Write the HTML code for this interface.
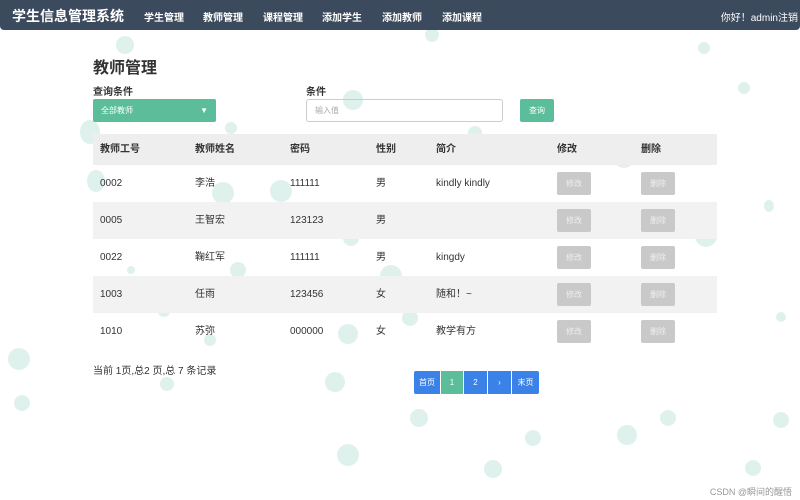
<!DOCTYPE html>
<html><head><meta charset="utf-8"><style>
body{margin:0;width:800px;height:500px;background:#fff;position:relative;overflow:hidden;font-family:"Liberation Sans","Noto Sans CJK SC",sans-serif;color:#333}
.nav{position:absolute;left:0;top:0;width:800px;height:30px;background:#3b4a5c;border-radius:0 0 4px 4px;color:#fff}
.nav .t{position:absolute;left:12px;top:6px;font-size:14px;font-weight:bold}
.nav a{position:absolute;top:9px;font-size:10px;font-weight:bold}
.b{position:absolute;border-radius:50%;background:rgba(140,205,185,.28)}
.a{position:absolute}
table{position:absolute;left:93px;top:134px;width:624px;border-collapse:collapse;font-size:10px}
td{height:37px;padding:0;vertical-align:middle;line-height:14px}
tr.h td{height:31px;background:#eeeeee;font-weight:bold}
tr.s td{background:#f2f2f2}
.btn{display:inline-block;width:34px;height:23px;background:#c9c9c9;color:#eee;font-size:8px;text-align:center;line-height:23px;border-radius:2px;vertical-align:middle}
.p{position:absolute;top:371px;height:23px;color:#fff;font-size:8px;text-align:center;line-height:23px;background:#3a82e8;border-right:1px solid #fff}
</style></head><body>
<div class="b" style="left:116px;top:36px;width:18px;height:18px"></div>
<div class="b" style="left:425px;top:28px;width:14px;height:14px"></div>
<div class="b" style="left:698px;top:42px;width:12px;height:12px"></div>
<div class="b" style="left:738px;top:82px;width:12px;height:12px"></div>
<div class="b" style="left:343px;top:90px;width:20px;height:20px"></div>
<div class="b" style="left:80px;top:120px;width:20px;height:24px"></div>
<div class="b" style="left:225px;top:122px;width:12px;height:12px"></div>
<div class="b" style="left:468px;top:126px;width:14px;height:14px"></div>
<div class="b" style="left:613px;top:146px;width:22px;height:22px"></div>
<div class="b" style="left:87px;top:170px;width:18px;height:22px"></div>
<div class="b" style="left:212px;top:182px;width:22px;height:22px"></div>
<div class="b" style="left:270px;top:180px;width:22px;height:22px"></div>
<div class="b" style="left:318px;top:206px;width:20px;height:20px"></div>
<div class="b" style="left:410px;top:219px;width:18px;height:18px"></div>
<div class="b" style="left:343px;top:230px;width:16px;height:16px"></div>
<div class="b" style="left:695px;top:225px;width:22px;height:22px"></div>
<div class="b" style="left:764px;top:200px;width:10px;height:12px"></div>
<div class="b" style="left:230px;top:262px;width:16px;height:16px"></div>
<div class="b" style="left:380px;top:265px;width:22px;height:22px"></div>
<div class="b" style="left:127px;top:266px;width:8px;height:8px"></div>
<div class="b" style="left:158px;top:305px;width:12px;height:12px"></div>
<div class="b" style="left:402px;top:310px;width:16px;height:16px"></div>
<div class="b" style="left:338px;top:324px;width:20px;height:20px"></div>
<div class="b" style="left:204px;top:334px;width:12px;height:12px"></div>
<div class="b" style="left:8px;top:348px;width:22px;height:22px"></div>
<div class="b" style="left:325px;top:372px;width:20px;height:20px"></div>
<div class="b" style="left:410px;top:409px;width:18px;height:18px"></div>
<div class="b" style="left:14px;top:395px;width:16px;height:16px"></div>
<div class="b" style="left:160px;top:377px;width:14px;height:14px"></div>
<div class="b" style="left:337px;top:444px;width:22px;height:22px"></div>
<div class="b" style="left:484px;top:460px;width:18px;height:18px"></div>
<div class="b" style="left:617px;top:425px;width:20px;height:20px"></div>
<div class="b" style="left:660px;top:410px;width:16px;height:16px"></div>
<div class="b" style="left:773px;top:412px;width:16px;height:16px"></div>
<div class="b" style="left:525px;top:430px;width:16px;height:16px"></div>
<div class="b" style="left:776px;top:312px;width:10px;height:10px"></div>
<div class="b" style="left:745px;top:460px;width:16px;height:16px"></div>
<div class="nav"><span class="t">学生信息管理系统</span>
<a style="left:144px">学生管理</a><a style="left:203px">教师管理</a><a style="left:263px">课程管理</a><a style="left:322px">添加学生</a><a style="left:382px">添加教师</a><a style="left:442px">添加课程</a>
<span style="position:absolute;right:2px;top:9px;font-size:10px">你好！admin注销</span></div>
<div class="a" style="left:93px;top:54px;font-size:16px;font-weight:bold">教师管理</div>
<div class="a" style="left:93px;top:83px;font-size:10px;font-weight:bold">查询条件</div>
<div class="a" style="left:306px;top:83px;font-size:10px;font-weight:bold">条件</div>
<div class="a" style="left:93px;top:99px;width:123px;height:23px;background:#5bbd9a;border-radius:2px;color:#fff;font-size:8px;line-height:23px"><span style="margin-left:8px">全部教师</span><span style="position:absolute;right:8px;font-size:8px">▼</span></div>
<div class="a" style="left:306px;top:99px;width:195px;height:21px;border:1px solid #ccc;border-radius:3px;color:#aaa;font-size:8px;line-height:21px"><span style="margin-left:8px">输入值</span></div>
<div class="a" style="left:520px;top:99px;width:34px;height:23px;background:#5bbd9a;border-radius:2px;color:#fff;font-size:8px;line-height:23px;text-align:center">查询</div>
<table>
<colgroup><col style="width:102px"><col style="width:95px"><col style="width:86px"><col style="width:60px"><col style="width:121px"><col style="width:84px"><col></colgroup>
<tr class="h"><td style="padding-left:7px">教师工号</td><td>教师姓名</td><td>密码</td><td>性别</td><td>简介</td><td>修改</td><td>删除</td></tr>
<tr><td style="padding-left:7px">0002</td><td>李浩</td><td>111111</td><td>男</td><td>kindly kindly</td><td><span class="btn">修改</span></td><td><span class="btn">删除</span></td></tr>
<tr class="s"><td style="padding-left:7px">0005</td><td>王智宏</td><td>123123</td><td>男</td><td></td><td><span class="btn">修改</span></td><td><span class="btn">删除</span></td></tr>
<tr><td style="padding-left:7px">0022</td><td>鞠红军</td><td>111111</td><td>男</td><td>kingdy</td><td><span class="btn">修改</span></td><td><span class="btn">删除</span></td></tr>
<tr class="s"><td style="padding-left:7px">1003</td><td>任雨</td><td>123456</td><td>女</td><td>随和！~</td><td><span class="btn">修改</span></td><td><span class="btn">删除</span></td></tr>
<tr><td style="padding-left:7px">1010</td><td>苏弥</td><td>000000</td><td>女</td><td>教学有方</td><td><span class="btn">修改</span></td><td><span class="btn">删除</span></td></tr>
</table>
<div class="a" style="left:93px;top:362px;font-size:10px">当前 1页,总2 页,总 7 条记录</div>
<div class="p" style="left:414px;width:26px;border-radius:2px 0 0 2px">首页</div>
<div class="p" style="left:441px;width:22px;background:#5bbd9a">1</div>
<div class="p" style="left:464px;width:23px">2</div>
<div class="p" style="left:488px;width:23px">›</div>
<div class="p" style="left:512px;width:27px;border:0;border-radius:0 2px 2px 0">末页</div>
<div class="a" style="right:8px;top:485px;font-size:9px;color:#999">CSDN @瞬间的醒悟</div>
</body></html>
